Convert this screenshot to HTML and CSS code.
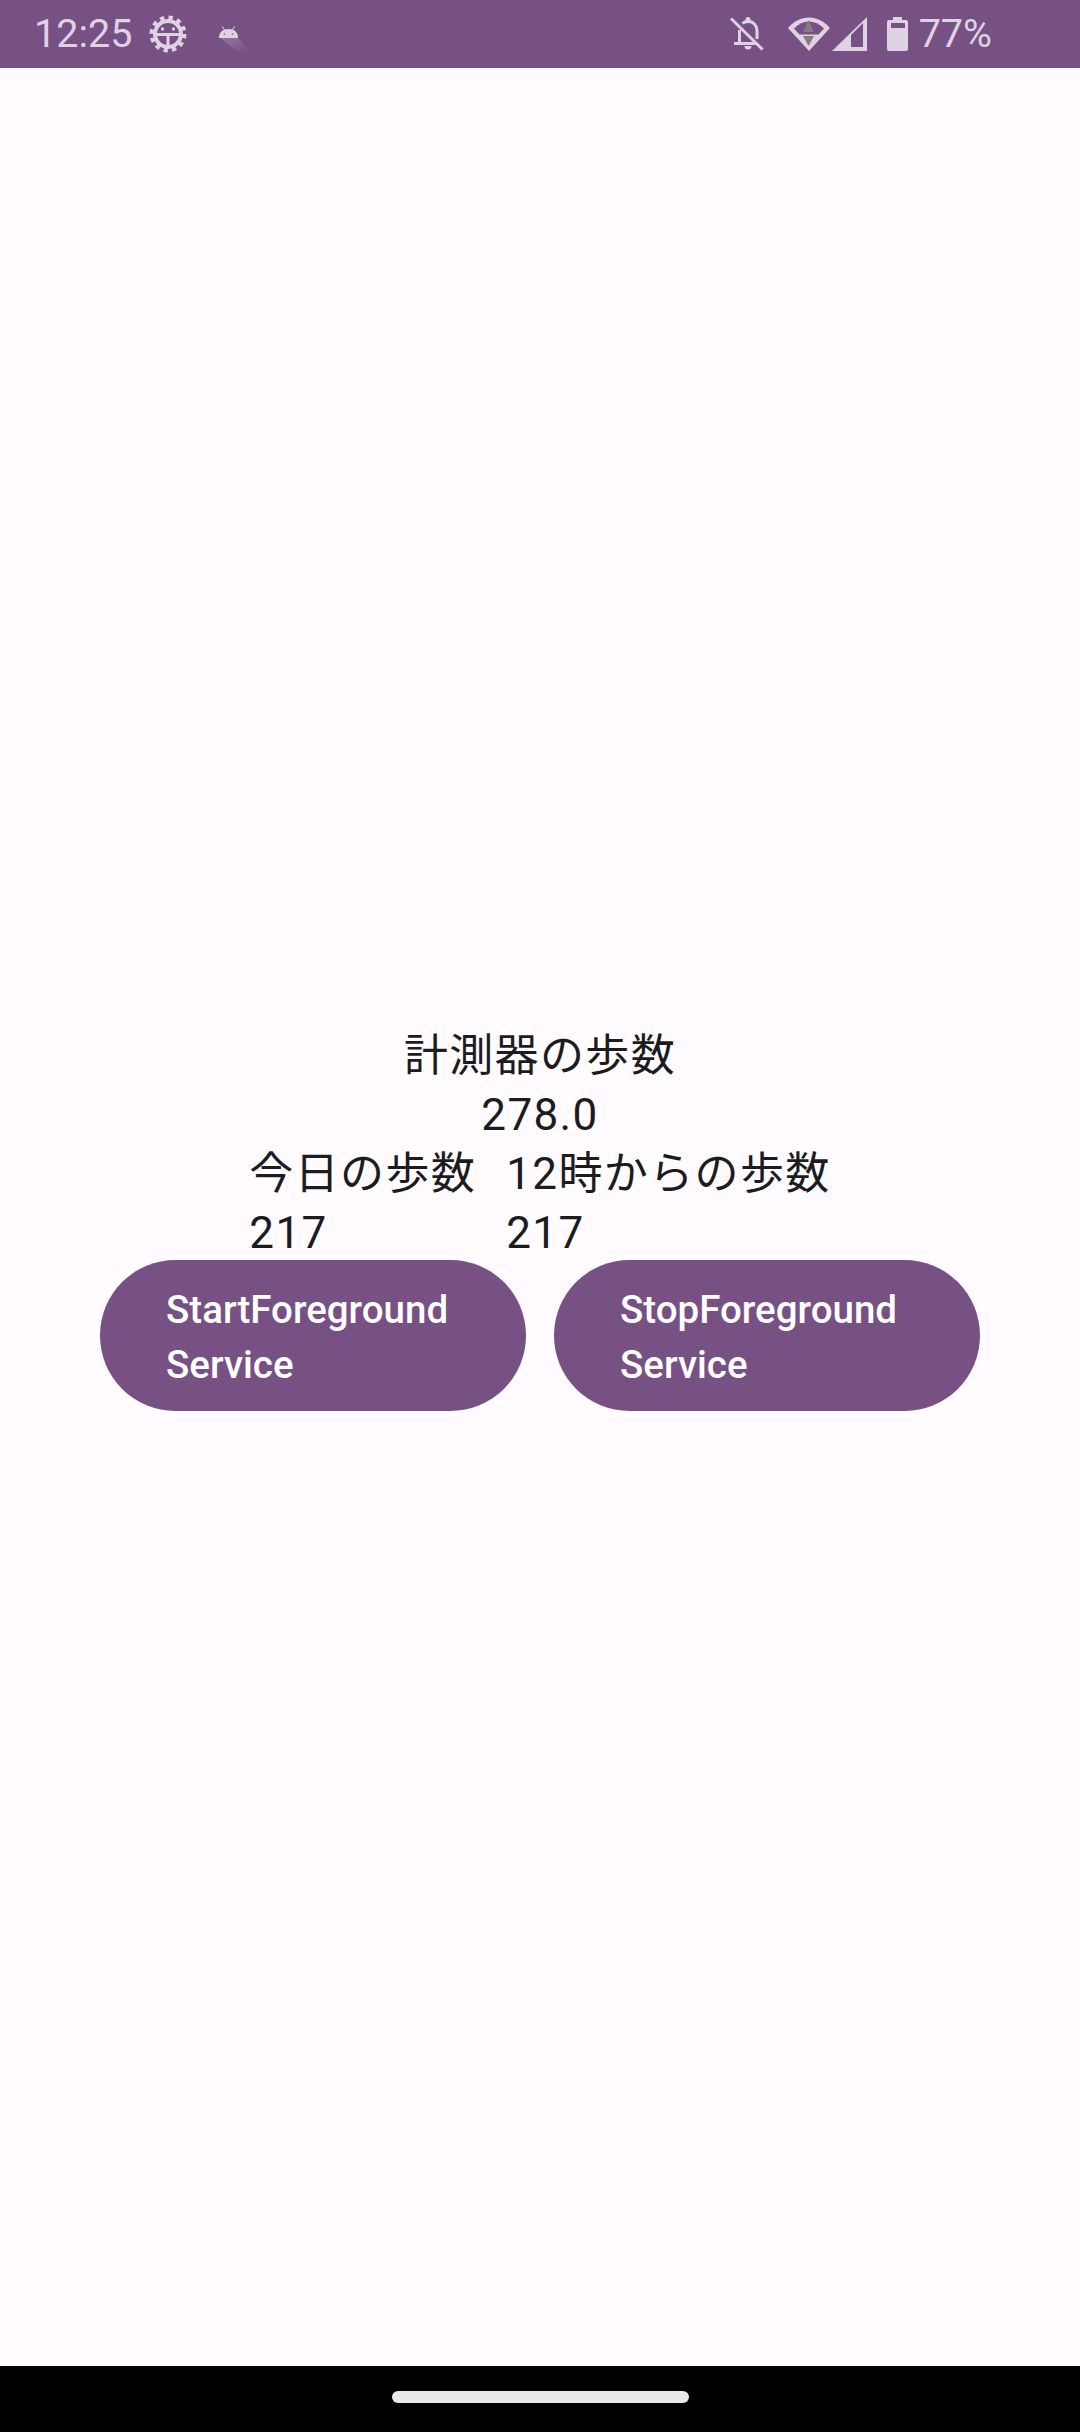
FILE: index.html
```html
<!DOCTYPE html>
<html lang="ja">
<head>
<meta charset="utf-8">
<title>歩数</title>
<link rel="stylesheet" href="styles.css">
</head>
<body>
<div class="screen">
  <header class="status">
    <div class="status-left">
      <span class="time">12:25</span>
      <svg class="ic-gear" viewBox="0 0 38 38" aria-hidden="true">
        <g fill="none" stroke="#dfd3e3">
          <circle cx="19" cy="19" r="13" stroke-width="4"/>
          <circle cx="19" cy="19" r="16" stroke-width="5" stroke-dasharray="4.19 4.19"/>
          <path d="M6 19.500H32M19 19.500V32" stroke-width="3"/>
        </g>
        <circle cx="13.500" cy="14" r="1.700" fill="#dfd3e3"/>
        <circle cx="24.500" cy="14" r="1.700" fill="#dfd3e3"/>
      </svg>
      <svg class="ic-droid" viewBox="0 0 34 30" aria-hidden="true">
        <defs>
          <linearGradient id="droid-shadow" x1="0" y1="0" x2="1" y2="1">
            <stop offset="0" stop-color="#dfd3e3" stop-opacity=".3"/>
            <stop offset="1" stop-color="#dfd3e3" stop-opacity="0"/>
          </linearGradient>
        </defs>
        <path d="M3 15H20L31 28H18Z" fill="url(#droid-shadow)"/>
        <path d="M1 15C1 9 5 6 10.500 6C16 6 20 9 20 15Z" fill="#dfd3e3"/>
        <path d="M4.500 3.500L6.500 7M16.500 3.500L14.500 7" stroke="#dfd3e3" stroke-width="1"/>
        <circle cx="6.500" cy="11" r=".8" fill="#775084"/>
        <circle cx="14.500" cy="11" r=".8" fill="#775084"/>
      </svg>
    </div>
    <div class="status-right">
      <svg class="ic-bell" viewBox="0 0 34 34" aria-hidden="true">
        <path d="M12.500 6.500C14 5 16 4.500 18 4.500C24 4.500 27 9 27 14V22M9.500 13V26" fill="none" stroke="#dfd3e3" stroke-width="3"/>
        <path d="M4 26.500H26" stroke="#dfd3e3" stroke-width="3"/>
        <circle cx="18" cy="2.500" r="2.500" fill="#dfd3e3"/>
        <path d="M14.500 29H21.500A3.500 3.500 0 0 1 14.500 29Z" fill="#dfd3e3"/>
        <path d="M1 1.500L32.500 32.500" stroke="#dfd3e3" stroke-width="3"/>
      </svg>
      <svg class="ic-wifi" viewBox="0 0 42 34" aria-hidden="true">
        <path d="M0 11C12 -3 30 -3 42 11L21 34Z" fill="#dfd3e3"/>
        <path d="M6 11.500C15 2 27 2 36 11.500L30.500 17.500H11.500Z" fill="#775084"/>
        <path d="M20.500 3L15 15H26Z" fill="#857b85"/>
        <path d="M20.500 29L15 19H26Z" fill="#857b85"/>
      </svg>
      <svg class="ic-signal" viewBox="0 0 35 34" aria-hidden="true">
        <path fill-rule="evenodd" d="M0 34L35 0V34ZM19 18V30H31V6Z" fill="#dfd3e3"/>
      </svg>
      <svg class="ic-batt" viewBox="0 0 21 34" aria-hidden="true">
        <path fill-rule="evenodd" d="M6 0H15V3H19A2 2 0 0 1 21 5V32A2 2 0 0 1 19 34H2A2 2 0 0 1 0 32V5A2 2 0 0 1 2 3H6ZM4 6V11H18V6Z" fill="#dfd3e3"/>
      </svg>
      <span class="pct">77%</span>
    </div>
  </header>
  <main class="content">
    <div class="readings">
      <p class="line">計測器の歩数</p>
      <p class="line">278.0</p>
      <div class="columns">
        <div class="col">
          <p class="line">今日の歩数</p>
          <p class="line">217</p>
        </div>
        <div class="col">
          <p class="line">12時からの歩数</p>
          <p class="line">217</p>
        </div>
      </div>
    </div>
    <div class="buttons">
      <button class="btn" type="button">StartForeground Service</button>
      <button class="btn" type="button">StopForeground Service</button>
    </div>
  </main>
  <footer class="nav"><span class="handle"></span></footer>
</div>
</body>
</html>
```
FILE: styles.css
```css
html, body {
  margin: 0;
  padding: 0;
}
.screen {
  width: 1080px;
  height: 2432px;
  display: flex;
  flex-direction: column;
  background: #fffbfe;
  font-family: Roboto, "Noto Sans CJK JP", sans-serif;
  overflow: hidden;
}
.status {
  height: 68px;
  flex: none;
  background: #775084;
  color: #dfd3e3;
  display: flex;
  justify-content: space-between;
  align-items: center;
  padding: 0 88px 0 34px;
  font-size: 39.5px;
}
.status-left, .status-right {
  display: flex;
  align-items: center;
}
.time, .pct {
  line-height: 68px;
}
.ic-gear {
  width: 38px;
  height: 38px;
  margin-left: 17px;
}
.ic-droid {
  width: 34px;
  height: 30px;
  margin-left: 31px;
  margin-top: 8px;
}
.ic-bell {
  width: 34px;
  height: 34px;
}
.ic-wifi {
  width: 42px;
  height: 34px;
  margin-left: 24px;
}
.ic-signal {
  width: 35px;
  height: 34px;
  margin-left: 2px;
}
.ic-batt {
  width: 21px;
  height: 34px;
  margin-left: 20px;
}
.pct {
  margin-left: 11px;
}
.content {
  flex: 1;
  display: flex;
  flex-direction: column;
  align-items: center;
  justify-content: center;
  color: #1c1b1f;
}
.readings {
  display: flex;
  flex-direction: column;
  align-items: center;
  padding-top: 3px;
  margin-bottom: -3px;
}
.line {
  margin: 0;
  font-size: 44px;
  letter-spacing: 1.375px;
  line-height: 59px;
}
.columns {
  display: flex;
  align-self: stretch;
  gap: 30px;
}
.buttons {
  display: flex;
  gap: 28px;
}
.btn {
  width: 426px;
  height: 151px;
  border: 0;
  border-radius: 76px;
  padding: 4px 66px 0;
  background: #775084;
  color: #fff;
  font-family: Roboto, sans-serif;
  font-size: 38.5px;
  font-weight: 500;
  letter-spacing: 0;
  line-height: 55px;
  text-align: left;
}
.nav {
  height: 66px;
  flex: none;
  background: #000;
  display: flex;
  justify-content: center;
  padding-top: 25px;
  box-sizing: border-box;
}
.handle {
  width: 297px;
  height: 12px;
  border-radius: 6px;
  background: #e9e9e9;
}
```
